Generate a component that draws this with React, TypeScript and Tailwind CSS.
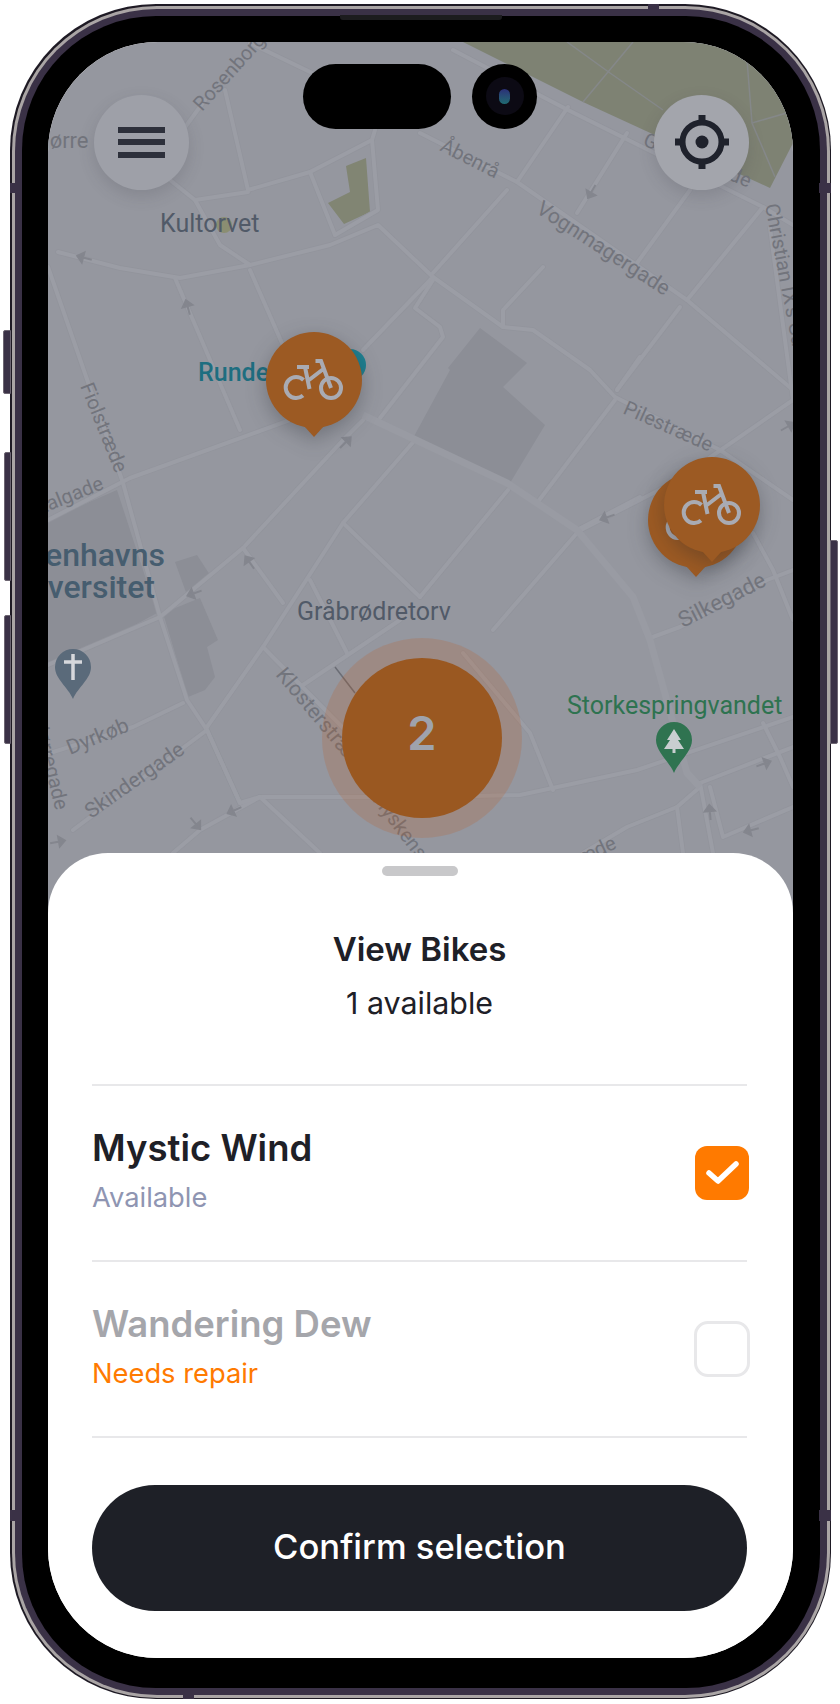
const ROADS = [
  "M58 252L120 268L180 278L250 265L330 245L378 225L433 277L503 327L533 330L590 370L615 397L720 450L793 500",
  "M175 278L240 430", "M250 270L285 350", "M225 90L248 190L310 172L372 140L378 120",
  "M170 180L195 200L248 192", "M195 200L220 245L250 265", "M310 172L335 235", "M372 140L378 210L335 235",
  "M250 43L333 83", "M205 100L183 130", "M48 267L123 483L160 617L187 700L207 730L240 803",
  "M48 665L113 637L160 617L243 548L343 440L363 420", "M48 520L130 478L290 420L350 385",
  "M207 727L263 647L343 523L415 440", "M243 548L283 603", "M343 523L420 597", "M263 647L350 735",
  "M310 580L347 653", "M300 687L400 620", "M73 830L207 730", "M50 753L133 727L183 703",
  "M260 797L420 797L520 795L637 770L793 717", "M260 797L200 830L173 853", "M260 797L320 853", "M207 730L240 803L260 797",
  "M577 532L673 483L793 400", "M650 638L680 627L767 580L793 570",
  "M753 533L773 570L793 620", "M700 787L677 807L627 827L583 853", "M700 783L793 747", "M700 783L713 853", "M677 807L683 853",
  "M763 723L780 757L793 787", "M710 787L723 837L793 807", "M508 490L420 597", "M463 653L530 733L553 790",
  "M453 50L568 110L763 207L793 225", "M420 133L517 182L687 300L793 390", "M568 107L517 182", "M507 190L433 273",
  "M627 133L577 213", "M690 190L637 263", "M763 207L687 300", "M680 307L617 390", "M617 390L640 357",
  "M503 327L503 310L543 267", "M770 228L793 400", "M433 277L363 350", "M433 280L415 308L440 327L443 337L380 418",
  "M615 400L537 503", "M577 530L640 497", "M577 533L493 630",
];

const ARROWS = [
  [85, 258, 195], [188, 308, -105], [592, 191, 120], [787, 427, -30], [345, 443, -45], [250, 563, -125],
  [195, 593, 160], [235, 810, 155], [195, 823, 50], [57, 842, -10], [608, 517, 160], [763, 764, -20],
  [710, 813, -95], [752, 830, 165],
];

const STREETS = [
  { t: "Rosenborg", x: 202, y: 112, a: -48, s: 20 },
  { t: "Nørre", x: 34, y: 148, a: 0, s: 22 },
  { t: "Åbenrå", x: 439, y: 150, a: 27, s: 20 },
  { t: "Vognmagergade", x: 535, y: 212, a: 33, s: 21 },
  { t: "Gothersgade", x: 642, y: 145, a: 22, s: 20 },
  { t: "Christian IX's Gade", x: 765, y: 205, a: 79, s: 20 },
  { t: "Pilestræde", x: 622, y: 413, a: 24, s: 20 },
  { t: "Silkegade", x: 683, y: 628, a: -27, s: 22 },
  { t: "Fiolstræde", x: 80, y: 386, a: 68, s: 20 },
  { t: "Klosterstræde", x: 275, y: 675, a: 50, s: 21 },
  { t: "Hyskenstræde", x: 372, y: 800, a: 53, s: 20 },
  { t: "Dyrkøb", x: 70, y: 755, a: -22, s: 21 },
  { t: "Skindergade", x: 91, y: 819, a: -35, s: 21 },
  { t: "Nørregade", x: 33, y: 720, a: 76, s: 20 },
  { t: "Læderstræde", x: 510, y: 898, a: -25, s: 20 },
  { t: "Krystalgade", x: 7, y: 528, a: -22, s: 20 },
];

function MapLayer() {
  return (
    <svg viewBox="48 42 745 871" className="absolute inset-0 block w-[745px] h-[871px] font-[Roboto,sans-serif]">
      <rect x="48" y="42" width="745" height="871" fill="#95979f" />
      <polygon points="463,42 793,42 793,143 770,188 583,102" fill="#7e8273" />
      <path d="M567 42L610 73L663 110M633 42L583 102M747 60L752 123L775 177M752 123L790 112" stroke="#858889" strokeWidth="1.5" fill="none" />
      <polygon points="480,328 527,363 503,387 545,425 510,483 412,440 450,370 448,368" fill="#8c8e96" />
      <polygon points="48,520 117,490 157,613 113,637 48,667" fill="#8c8e96" />
      <polygon points="175,562 197,555 210,575 187,595" fill="#8c8e96" />
      <polygon points="163,613 200,598 218,640 207,647 215,677 205,690 188,697" fill="#8c8e96" />
      <polygon points="346,166 366,158 370,212 344,224 328,203 350,192" fill="#818573" />
      <circle cx="224" cy="225" r="8" fill="#8b8e72" />
      {ROADS.map((d) => (
        <path key={`edge-${d}`} d={d} fill="none" stroke="#92949c" strokeWidth="5.5" strokeLinejoin="round" strokeLinecap="round" />
      ))}
      {ROADS.map((d) => (
        <path key={d} d={d} fill="none" stroke="#9b9da5" strokeWidth="4" strokeLinejoin="round" strokeLinecap="round" />
      ))}
      <path d="M363 415L507 483L577 530L633 597L650 640L687 773L700 787" fill="none" stroke="#999ba3" strokeWidth="7" strokeLinejoin="round" />
      {ARROWS.map(([x, y, a]) => (
        <path key={`${x}-${y}`} transform={`translate(${x} ${y}) rotate(${a})`} d="M-7 0H3M2 -5L8 0L2 5Z" stroke="#84868e" strokeWidth="2" fill="#84868e" />
      ))}
      <path d="M335 667L355 693" stroke="#6b6d75" strokeWidth="1.5" />
      {STREETS.map((s) => (
        <text key={s.t} transform={`translate(${s.x} ${s.y}) rotate(${s.a})`} fontSize={s.s} fill="#72747c">{s.t}</text>
      ))}
      <text x="160" y="232" fontSize="25" fill="#515a68">Kultorvet</text>
      <text x="297" y="620" fontSize="25" fill="#515a68">Gråbrødretorv</text>
      <circle cx="350" cy="365" r="16" fill="#1e7f90" />
      <text x="198" y="381" fontSize="25" fontWeight="500" fill="#1e6e80">Rundetaarn</text>
      <text x="165" y="566" fontSize="32" fontWeight="500" textAnchor="end" fill="#465d6f">Københavns</text>
      <text x="155" y="598" fontSize="32" fontWeight="500" textAnchor="end" fill="#465d6f">Universitet</text>
      <text x="567" y="714" fontSize="25" fill="#2e7350">Storkespringvandet</text>
      <path d="M73 649a18 18 0 0 1 18 18c0 12-13 20-18 32c-5-12-18-20-18-32a18 18 0 0 1 18-18Z" fill="#5a6a7a" />
      <path d="M73 654V680M64 662H82" stroke="#d6d8dc" strokeWidth="3.5" />
      <path d="M674 722a18 18 0 0 1 18 18c0 12-13 21-18 33c-5-12-18-21-18-33a18 18 0 0 1 18-18Z" fill="#2f7350" />
      <path d="M674 729L681 740H678L684 749H675.5V753H672.5V749H664L670 740H667Z" fill="#c9ced0" />
    </svg>
  );
}

function Bike() {
  return (
    <g fill="none" stroke="#a9abb3" strokeWidth="4">
      <path d="M-10.5 0A10.5 10.5 0 1 0 -11 15.5" />
      <circle cx="17" cy="8" r="10" />
      <path d="M-17 -13H-5M-9 -13L-4.5 9M-5 0L10 -11.5M1.5 -19H7L17 8" />
    </g>
  );
}

function BikeMarker({ className }: { className: string }) {
  return (
    <svg viewBox="-48 -48 96 106" className={`absolute w-[96px] h-[106px] drop-shadow-[0_6px_10px_rgba(30,32,40,0.3)] ${className}`}>
      <circle r="48" fill="#9c5a23" />
      <polygon points="-10,46 10,46 0,57" fill="#9c5a23" />
      <Bike />
    </svg>
  );
}

function Row({ name, status, active }: { name: string; status: string; active?: boolean }) {
  return (
    <div className="flex items-center justify-between h-[176px] border-b-2 border-[#e8e8ea]">
      <div className="flex flex-col pb-[5px]">
        <span className={`text-[36.5px] leading-[50px] font-semibold ${active ? "text-[#1e2027]" : "text-[#a5a6ab]"}`}>{name}</span>
        <span className={`text-[27.3px] leading-[38px] mt-[6px] ${active ? "text-[#8f95b2]" : "text-[#ff7a00]"}`}>{status}</span>
      </div>
      {active ? (
        <div className="flex items-center justify-center w-[54px] h-[54px] mr-[-2px] rounded-[12px] bg-[#ff7a00]">
          <svg viewBox="0 0 54 54" className="w-[54px] h-[54px]">
            <path d="M14 27L23 35L41 18" fill="none" stroke="#fff" strokeWidth="5.5" strokeLinecap="round" strokeLinejoin="round" />
          </svg>
        </div>
      ) : (
        <div className="w-[56px] h-[56px] mr-[-3px] rounded-[14px] border-[3px] border-[#e8e8ea]" />
      )}
    </div>
  );
}

export default function App() {
  return (
    <div className="relative w-[840px] h-[1704px] bg-white pl-[10px] pt-[4px] overflow-hidden font-[Inter,sans-serif]">
      {/* side buttons */}
      <div className="absolute left-[3px] top-[330px] w-[8px] h-[64px] rounded-l-[2px] border border-[#6d6672] bg-[#3a3146]" />
      <div className="absolute left-[4px] top-[452px] w-[7px] h-[129px] rounded-l-[2px] border border-[#6d6672] bg-[#3a3146]" />
      <div className="absolute left-[4px] top-[615px] w-[7px] h-[129px] rounded-l-[2px] border border-[#6d6672] bg-[#3a3146]" />
      <div className="absolute left-[830px] top-[540px] w-[8px] h-[204px] rounded-r-[2px] border border-[#6d6672] bg-[#3a3146]" />

      {/* phone body */}
      <div className="w-[821px] h-[1695px] rounded-[146px] bg-[#1e1a24] p-[1.5px]">
        <div className="h-full rounded-[145px] bg-[#aaa5a5] p-[3px]">
          <div className="h-full rounded-[142px] bg-[#3a3146] p-[7px]">
            <div className="h-full rounded-[134px] bg-black pl-[26.5px] pr-[26.5px] pt-[26px] pb-[29px]">
              {/* screen */}
              <div className="relative flex flex-col h-[1616px] rounded-[110px] overflow-hidden bg-white">
                <div className="relative h-[871px] shrink-0">
                  <MapLayer />

                  <BikeMarker className="left-[218px] top-[290px]" />
                  <BikeMarker className="left-[600px] top-[430px]" />
                  <BikeMarker className="left-[615.5px] top-[415px]" />

                  {/* cluster */}
                  <div className="absolute left-[274px] top-[596px] flex items-center justify-center w-[200px] h-[200px] rounded-full bg-[#ca4b00]/[0.17]">
                    <div className="flex items-center justify-center w-[160px] h-[160px] pb-[9px] rounded-full bg-[#9a5821] text-[47px] font-semibold text-[#9fa3ad]">2</div>
                  </div>

                  {/* map buttons */}
                  <button className="absolute left-[46px] top-[53px] flex flex-col items-center justify-center gap-[6.5px] w-[95px] h-[95px] rounded-full bg-[#9ea0a8] shadow-[0_6px_16px_rgba(60,62,70,0.18)]">
                    <span className="block w-[47px] h-[6px] bg-[#2d303b]" />
                    <span className="block w-[47px] h-[6px] bg-[#2d303b]" />
                    <span className="block w-[47px] h-[6px] bg-[#2d303b]" />
                  </button>
                  <button className="absolute left-[606px] top-[53px] flex items-center justify-center w-[95px] h-[95px] rounded-full bg-[#a3a5ac] shadow-[0_6px_16px_rgba(60,62,70,0.18)]">
                    <svg viewBox="-28 -28 56 56" className="w-[56px] h-[56px]">
                      <circle r="19.5" fill="none" stroke="#1f222c" strokeWidth="6" />
                      <circle r="6.5" fill="#1f222c" />
                      <path d="M0 -27V-19M0 27V19M-27 0H-19M27 0H19" stroke="#1f222c" strokeWidth="7" />
                    </svg>
                  </button>

                  {/* dynamic island */}
                  <div className="absolute left-[255px] top-[22px] w-[148px] h-[65px] rounded-full bg-black" />
                  <div className="absolute left-[424px] top-[22px] flex items-center justify-center w-[65px] h-[65px] rounded-full bg-black">
                    <div className="flex items-center justify-center w-[38px] h-[38px] rounded-full bg-[#0c0a14]">
                      <div className="w-[11px] h-[15px] rounded-full bg-gradient-to-b from-[#2b2f78] to-[#1f6a70]" />
                    </div>
                  </div>
                </div>

                {/* bottom sheet */}
                <div className="relative -mt-[60px] flex flex-1 flex-col rounded-t-[60px] bg-white pl-[44px] pr-[46px]">
                  <div className="mx-auto mt-[13px] w-[76px] h-[10px] rounded-full bg-[#c8c8ca]" />
                  <div className="flex flex-col items-center h-[210px] border-b-2 border-[#e8e8ea] text-[#1e2027]">
                    <h2 className="mt-[51px] text-[33px] leading-[44px] font-semibold">View Bikes</h2>
                    <p className="mt-[11px] text-[30.4px] leading-[42px]">1 available</p>
                  </div>
                  <Row name="Mystic Wind" status="Available" active />
                  <Row name="Wandering Dew" status="Needs repair" />
                  <button className="mt-[47px] h-[126px] pb-[2px] rounded-[63px] bg-[#1e2027] text-[34.6px] font-medium text-white">Confirm selection</button>
                </div>
              </div>
            </div>
          </div>
        </div>
      </div>

      {/* speaker slit */}
      <div className="absolute left-[340px] top-[15px] w-[162px] h-[5px] rounded-b-[3px] bg-[#1c1c1e]" />
      {/* antenna bands */}
      <div className="absolute left-[10px] top-[183px] w-[12px] h-[10px] bg-[#3a3146]" />
      <div className="absolute left-[819px] top-[183px] w-[12px] h-[10px] bg-[#3a3146]" />
      <div className="absolute left-[648px] top-[4px] w-[11px] h-[12px] bg-[#3a3146]" />
      <div className="absolute left-[183px] top-[1688px] w-[11px] h-[11px] bg-[#3a3146]" />
      <div className="absolute left-[10px] top-[1510px] w-[12px] h-[11px] bg-[#3a3146]" />
      <div className="absolute left-[819px] top-[1510px] w-[12px] h-[11px] bg-[#3a3146]" />
    </div>
  );
}
